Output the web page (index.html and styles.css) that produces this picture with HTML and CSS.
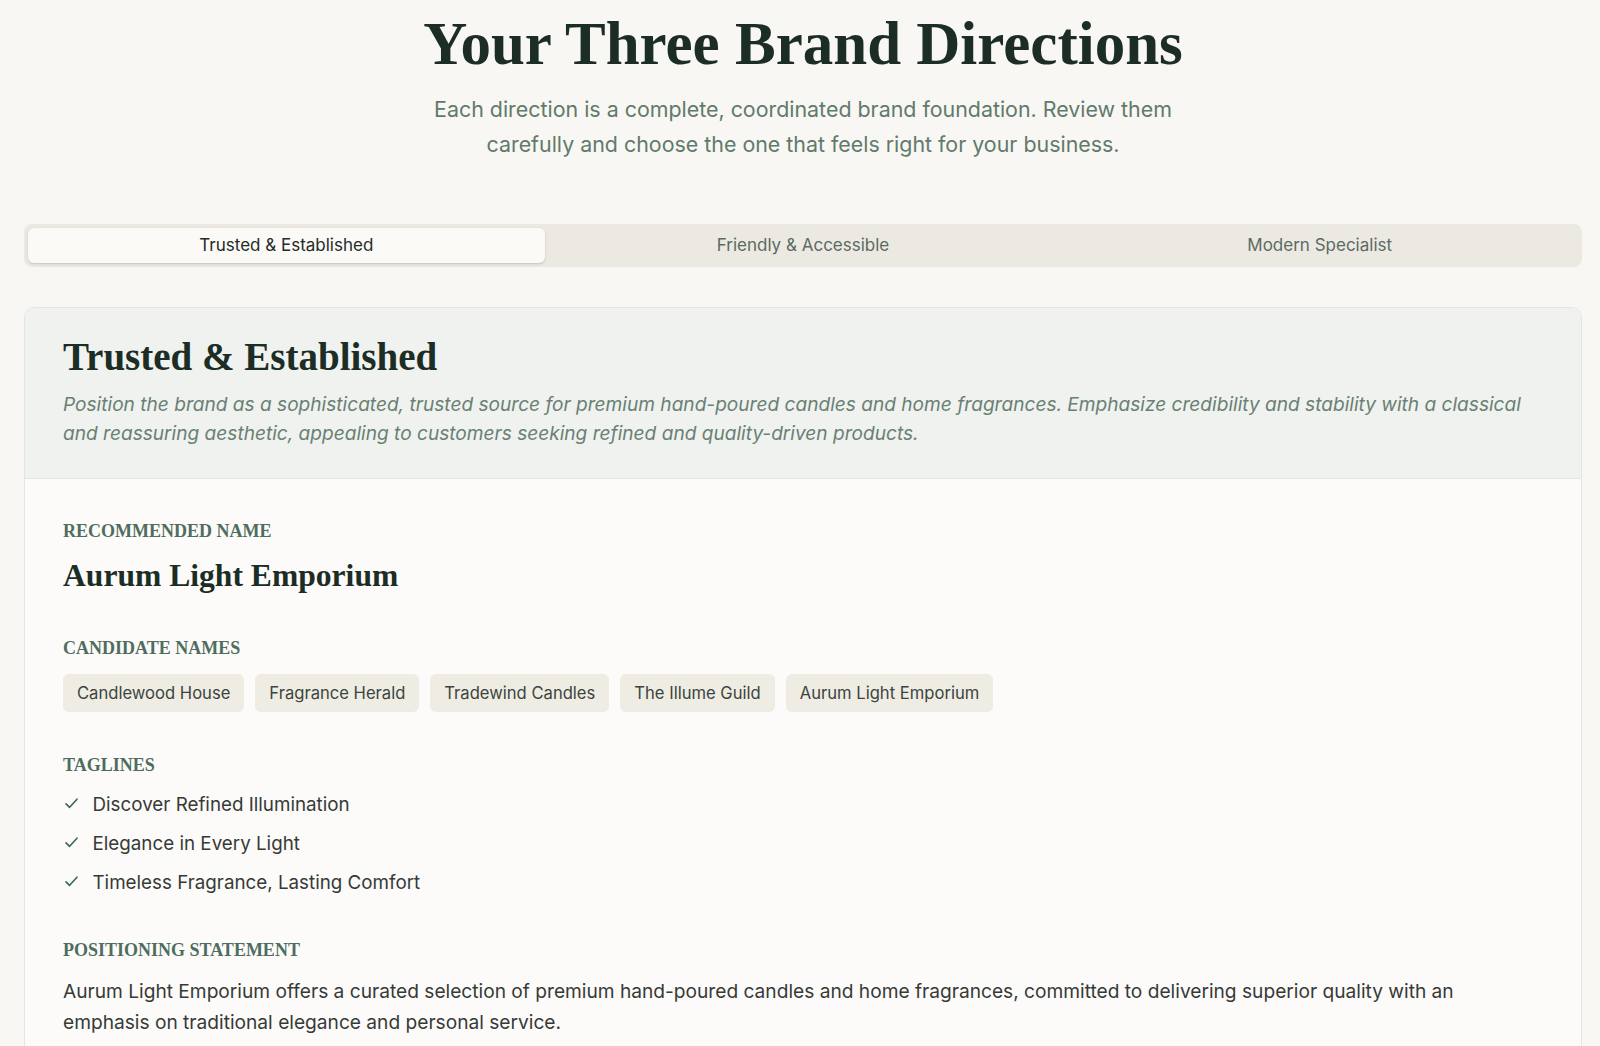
FILE: index.html
```html
<!DOCTYPE html>
<html lang="en">
<head>
<meta charset="utf-8">
<title>Your Three Brand Directions</title>
<link rel="stylesheet" href="styles.css">
</head>
<body>
<main class="page">
  <header class="intro">
    <h1 class="intro-title">Your Three Brand Directions</h1>
    <p class="intro-sub">Each direction is a complete, coordinated brand foundation. Review them carefully and choose the one that feels right for your business.</p>
  </header>

  <nav class="tabs">
    <button class="tab tab-active">Trusted &amp; Established</button>
    <button class="tab">Friendly &amp; Accessible</button>
    <button class="tab">Modern Specialist</button>
  </nav>

  <section class="card">
    <div class="card-head">
      <h2 class="card-title">Trusted &amp; Established</h2>
      <p class="card-desc">Position the brand as a sophisticated, trusted source for premium hand-poured candles and home fragrances. Emphasize credibility and stability with a classical and reassuring aesthetic, appealing to customers seeking refined and quality-driven products.</p>
    </div>
    <div class="card-body">
      <div class="block">
        <h3 class="label">Recommended Name</h3>
        <p class="rec-name">Aurum Light Emporium</p>
      </div>
      <div class="block">
        <h3 class="label">Candidate Names</h3>
        <ul class="chips">
          <li class="chip">Candlewood House</li>
          <li class="chip">Fragrance Herald</li>
          <li class="chip">Tradewind Candles</li>
          <li class="chip">The Illume Guild</li>
          <li class="chip">Aurum Light Emporium</li>
        </ul>
      </div>
      <div class="block">
        <h3 class="label">Taglines</h3>
        <ul class="taglines">
          <li class="tagline"><svg class="check" viewBox="0 0 16 16" width="16" height="16"><path d="M3 7.8 L6.6 11.3 L14 3.2"/></svg><span>Discover Refined Illumination</span></li>
          <li class="tagline"><svg class="check" viewBox="0 0 16 16" width="16" height="16"><path d="M3 7.8 L6.6 11.3 L14 3.2"/></svg><span>Elegance in Every Light</span></li>
          <li class="tagline"><svg class="check" viewBox="0 0 16 16" width="16" height="16"><path d="M3 7.8 L6.6 11.3 L14 3.2"/></svg><span>Timeless Fragrance, Lasting Comfort</span></li>
        </ul>
      </div>
      <div class="block">
        <h3 class="label">Positioning Statement</h3>
        <p class="statement">Aurum Light Emporium offers a curated selection of premium hand-poured candles and home fragrances, committed to delivering superior quality with an emphasis on traditional elegance and personal service.</p>
      </div>
    </div>
  </section>
</main>
</body>
</html>
```
FILE: styles.css
```css
* { box-sizing: border-box; }

body {
  margin: 0;
  background: #f8f7f3;
  font-family: "Inter", "Liberation Sans", sans-serif;
  color: #333834;
}

.page {
  padding: 11px 18px 0 24px;
}

/* Intro */
.intro {
  text-align: center;
}

.intro-title {
  margin: 0;
  font-family: "Liberation Serif", serif;
  font-weight: 700;
  font-size: 61px;
  line-height: 66px;
  color: #1b2d25;
}

.intro-sub {
  margin: 15px auto 0;
  max-width: 780px;
  font-size: 21.4px;
  line-height: 35px;
  color: #617a6c;
}

/* Tabs */
.tabs {
  margin-top: 62px;
  display: grid;
  grid-template-columns: repeat(3, 1fr);
  padding: 4px;
  background: #ece9e2;
  border-radius: 8px;
}

.tab {
  height: 35px;
  border: 0;
  background: transparent;
  border-radius: 6px;
  font-family: "Inter", "Liberation Sans", sans-serif;
  font-size: 17px;
  line-height: 35px;
  padding: 0;
  color: #5b6b63;
}

.tab-active {
  background: #fbfaf7;
  color: #262b28;
  box-shadow: 0 1px 3px rgba(40, 40, 30, 0.14), 0 1px 1px rgba(40, 40, 30, 0.06);
}

/* Card */
.card {
  margin-top: 40px;
  border: 1px solid #e6e6e0;
  border-radius: 10px;
  overflow: hidden;
  background: #fcfbf9;
}

.card-head {
  background: #eff2ee;
  padding: 26px 38px 30px;
  border-bottom: 1px solid #e3e6e1;
}

.card-title {
  margin: 0;
  font-family: "Liberation Serif", serif;
  font-weight: 700;
  font-size: 39px;
  line-height: 1.2;
  color: #1b2d25;
}

.card-desc {
  margin: 9px 0 0;
  font-style: italic;
  font-size: 19.1px;
  line-height: 29.3px;
  color: #6a8074;
}

.card-body {
  padding: 40px 38px 40px;
}

.block {
  margin-bottom: 41px;
}

.label {
  margin: 0 0 14px;
  font-family: "Liberation Serif", serif;
  font-weight: 700;
  font-size: 18px;
  line-height: 24px;
  text-transform: uppercase;
  color: #4f6d5e;
}

.rec-name {
  margin: 0;
  font-family: "Liberation Serif", serif;
  font-weight: 700;
  font-size: 31.6px;
  line-height: 1.2;
  color: #1b2d25;
}

/* Chips */
.chips {
  list-style: none;
  margin: 0;
  padding: 0;
  display: flex;
  flex-wrap: wrap;
  gap: 11px;
}

.chip {
  padding: 7px 14px;
  background: #efece3;
  border-radius: 6px;
  font-size: 16.6px;
  line-height: 24px;
  color: #3b4540;
}

/* Taglines */
.taglines {
  list-style: none;
  margin: 0;
  padding: 0;
  display: flex;
  flex-direction: column;
  gap: 10.8px;
}

.tagline {
  display: flex;
  align-items: flex-start;
  gap: 13.5px;
  font-size: 18.8px;
  line-height: 28px;
  color: #363a37;
}

.check {
  flex: none;
  margin-top: 5px;
  fill: none;
  stroke: #3f6b56;
  stroke-width: 1.7;
  stroke-linecap: round;
  stroke-linejoin: round;
}

/* Statement */
.statement {
  margin: 0;
  max-width: 1420px;
  font-size: 19.15px;
  line-height: 31.5px;
  color: #363a37;
}
```
